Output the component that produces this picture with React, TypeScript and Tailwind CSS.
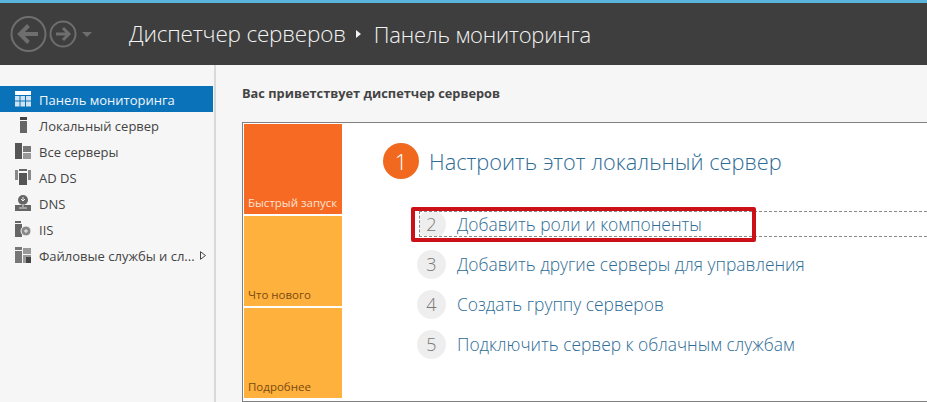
import { ReactNode } from "react";

const font = { fontFamily: '"Open Sans", "Noto Sans", sans-serif' };

function GridIcon({ active }: { active?: boolean }) {
  return (
    <svg width="16" height="16" viewBox="0 0 16 16" fill={active ? "#cfe3f3" : "#666"}>
      <rect x="0" y="0" width="16" height="4" fill="#fff" />
      <rect x="0" y="5" width="4.5" height="4.5" />
      <rect x="5.5" y="5" width="4.5" height="4.5" />
      <rect x="11" y="5" width="5" height="4.5" />
      <rect x="0" y="10.5" width="4.5" height="5" />
      <rect x="5.5" y="10.5" width="4.5" height="5" />
      <rect x="11" y="10.5" width="5" height="5" />
    </svg>
  );
}

function LocalIcon() {
  return (
    <svg width="16" height="16" viewBox="0 0 16 16" fill="#666">
      <rect x="5" y="0" width="7" height="3" fill="#444" />
      <rect x="5" y="4" width="7" height="12" />
    </svg>
  );
}

function AllIcon() {
  return (
    <svg width="16" height="16" viewBox="0 0 16 16">
      <rect x="0" y="0" width="7" height="16" fill="#555" />
      <rect x="8" y="3" width="8" height="6" fill="#777" />
      <rect x="8" y="10" width="8" height="6" fill="#999" />
    </svg>
  );
}

function AdIcon() {
  return (
    <svg width="16" height="16" viewBox="0 0 16 16">
      <path d="M0 1h3v10H0zM13 1h3v10h-3z" fill="#888" />
      <rect x="4" y="0" width="8" height="2" fill="#666" />
      <rect x="4" y="4" width="8" height="12" fill="#555" />
    </svg>
  );
}

function DnsIcon() {
  return (
    <svg width="16" height="16" viewBox="0 0 16 16">
      <circle cx="8" cy="5" r="5" fill="#666" />
      <path d="M8 2v4M6 4l2 2 2-2" stroke="#eee" strokeWidth="1" fill="none" />
      <rect x="0" y="10" width="16" height="6" fill="#666" />
      <path d="M8 9v3M4 13h8" stroke="#ddd" strokeWidth="1" />
    </svg>
  );
}

function IisIcon() {
  return (
    <svg width="16" height="16" viewBox="0 0 16 16">
      <rect x="0" y="0" width="6" height="2" fill="#666" />
      <rect x="0" y="3" width="7" height="13" fill="#666" />
      <circle cx="11" cy="10" r="5" fill="#888" stroke="#f5f5f5" strokeWidth="1" />
      <path d="M9 10h4M11 8v4" stroke="#eee" strokeWidth="1" />
    </svg>
  );
}

function FilesIcon() {
  return (
    <svg width="16" height="16" viewBox="0 0 16 16">
      <rect x="0" y="0" width="7" height="3" fill="#777" />
      <rect x="0" y="4" width="7" height="12" fill="#777" />
      <rect x="8" y="1" width="8" height="6" fill="#999" />
      <rect x="8" y="8" width="8" height="8" fill="#999" />
      <rect x="11" y="10" width="5" height="6" fill="#444" />
    </svg>
  );
}

const NAV: { label: string; icon: ReactNode; arrow?: boolean; active?: boolean }[] = [
  { label: "Панель мониторинга", icon: <GridIcon active />, active: true },
  { label: "Локальный сервер", icon: <LocalIcon /> },
  { label: "Все серверы", icon: <AllIcon /> },
  { label: "AD DS", icon: <AdIcon /> },
  { label: "DNS", icon: <DnsIcon /> },
  { label: "IIS", icon: <IisIcon /> },
  { label: "Файловые службы и сл...", icon: <FilesIcon />, arrow: true },
];

const STEPS = [
  { n: 2, label: "Добавить роли и компоненты" },
  { n: 3, label: "Добавить другие серверы для управления" },
  { n: 4, label: "Создать группу серверов" },
  { n: 5, label: "Подключить сервер к облачным службам" },
];

function Tile({ label, className }: { label: string; className: string }) {
  return (
    <div className={`h-[90px] flex items-end pl-[4px] pb-[4px] text-[11.5px] leading-[14px] ${className}`}>{label}</div>
  );
}

function StepBody({ n, label, clip }: { n: number; label: string; clip?: boolean }) {
  return (
    <>
      <div
        className={`w-[29px] h-[29px] rounded-full bg-[#eeeeee] text-[#777] text-[18px] font-light flex items-center justify-center shrink-0 ${
          clip ? "-ml-[3px]" : ""
        }`}
      >
        {n}
      </div>
      <span className="ml-[11px] text-[17.4px] font-light text-[#2e6c96] whitespace-nowrap">{label}</span>
    </>
  );
}

export default function App() {
  return (
    <div className="w-[927px] h-[402px] overflow-hidden flex flex-col bg-[#f6f6f6] relative" style={font}>
      <div className="h-[3px] bg-[#5ab5dc]" />

      {/* Header */}
      <div className="h-[62px] bg-[#3e3e3e] flex items-center">
        <div className="flex items-center pl-[10px] w-[129px]">
          <svg width="84" height="40" viewBox="0 0 84 40" fill="none" stroke="#6e6e6e">
            <circle cx="18.5" cy="20" r="17" strokeWidth="2" />
            <path d="M28 20H11M18.5 11.5L10 20l8.5 8.5" strokeWidth="4" />
            <circle cx="53" cy="20" r="12.5" strokeWidth="2" />
            <path d="M46 20h12M53 14l6 6-6 6" strokeWidth="3" />
            <path d="M72 18h10l-5 5z" fill="#6e6e6e" stroke="none" />
          </svg>
        </div>
        <span className="text-[22.5px] font-light text-[#f2f2f2] tracking-[-0.2px]">Диспетчер серверов</span>
        <svg width="6" height="8" viewBox="0 0 6 8" className="ml-[10px] mr-[12px]" fill="#f2f2f2">
          <path d="M0 0l5 4-5 4z" />
        </svg>
        <span className="text-[22px] font-light text-[#f2f2f2] tracking-[-0.2px]">Панель мониторинга</span>
      </div>

      <div className="flex flex-1 min-h-0">
        {/* Sidebar */}
        <div className="w-[216px] shrink-0 border-r-2 border-[#d9d9d9] pt-[21px] pr-px">
          {NAV.map((n) => (
            <div
              key={n.label}
              className={`h-[26px] flex items-center pl-[15px] text-[13px] ${
                n.active ? "bg-[#0a72b8] text-[#f0f6fb]" : "text-[#444]"
              }`}
            >
              <span className="w-[24px] shrink-0">{n.icon}</span>
              <span className="whitespace-nowrap pt-[3px]">{n.label}</span>
              {n.arrow && (
                <svg width="6" height="9" viewBox="0 0 6 9" className="ml-[5px]" fill="none" stroke="#444">
                  <path d="M.5.7l5 3.8-5 3.8z" />
                </svg>
              )}
            </div>
          ))}
        </div>

        {/* Main */}
        <div className="flex-1 min-w-0 pl-[26px] flex flex-col">
          <div className="h-[57px] pt-[20px] text-[12.8px] leading-[16px] font-bold text-[#444] whitespace-nowrap">
            Вас приветствует диспетчер серверов
          </div>
          <div className="h-[280px] border border-[#808080] border-r-0 bg-white flex pl-px pt-px">
            <div className="w-[98px] shrink-0 flex flex-col gap-[2px]">
              <Tile label="Быстрый запуск" className="bg-[#f66a24] text-[#fde3d2]" />
              <Tile label="Что нового" className="bg-[#ffb13d] text-[#7a4a10]" />
              <Tile label="Подробнее" className="bg-[#ffb13d] text-[#7a4a10]" />
            </div>
            <div className="flex-1 min-w-0 pl-[41px] pt-[19px]">
              <div className="flex items-center h-[36px]">
                <div className="w-[36px] h-[36px] rounded-full bg-[#f0691f] text-white text-[22px] font-light flex items-center justify-center">
                  1
                </div>
                <span className="ml-[10px] pt-[3px] text-[21.75px] font-light text-[#2e6c96] whitespace-nowrap">Настроить этот локальный сервер</span>
              </div>
              <div className="mt-[25px] ml-[34px]">
                {STEPS.map((s, i) => (
                  <div key={s.n} className="h-[40px] flex items-center">
                    {i === 0 ? (
                      <div className="h-[26px] flex items-center flex-1 ml-[2px] overflow-hidden border-y border-l border-dashed border-[#888]">
                        <StepBody n={s.n} label={s.label} clip />
                      </div>
                    ) : (
                      <StepBody n={s.n} label={s.label} />
                    )}
                  </div>
                ))}
              </div>
            </div>
          </div>
        </div>
      </div>

      {/* Red annotation */}
      <div className="absolute left-[411px] top-[207px] w-[345px] h-[35px] border-[4px] border-[#cc1018] rounded-[2px]" />
    </div>
  );
}
